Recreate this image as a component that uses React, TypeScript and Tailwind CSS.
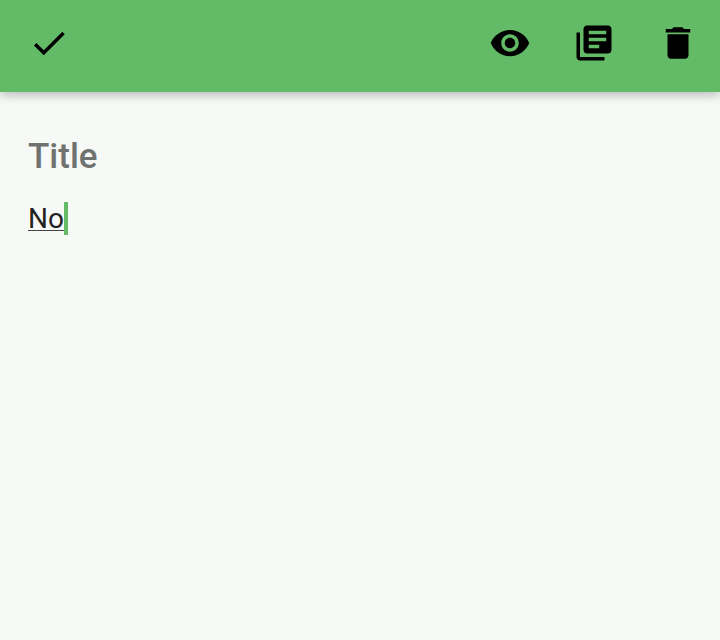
import React from 'react';

const icons = {
  check: 'M9 16.17 4.83 12l-1.42 1.41L9 19 21 7l-1.41-1.41z',
  eye: 'M12 4.5C7 4.5 2.73 7.61 1 12c1.73 4.39 6 7.5 11 7.5s9.27-3.11 11-7.5c-1.73-4.39-6-7.5-11-7.5zM12 17c-2.76 0-5-2.24-5-5s2.24-5 5-5 5 2.24 5 5-2.24 5-5 5zm0-8c-1.66 0-3 1.34-3 3s1.34 3 3 3 3-1.34 3-3-1.34-3-3-3z',
  notes: 'M4 6H2v14c0 1.1.9 2 2 2h14v-2H4V6zm16-4H8c-1.1 0-2 .9-2 2v12c0 1.1.9 2 2 2h12c1.1 0 2-.9 2-2V4c0-1.1-.9-2-2-2zm-1 9H9V9h10v2zm-4 4H9v-2h6v2zm4-8H9V5h10v2z',
  trash: 'M6 19c0 1.1.9 2 2 2h8c1.1 0 2-.9 2-2V7H6v12zM19 4h-3.5l-1-1h-5l-1 1H5v2h14V4z',
};

function IconButton({ label, path }: { label: string; path: string }) {
  return (
    <button aria-label={label} className="h-[42px] w-[42px] shrink-0">
      <svg viewBox="0 0 24 24" className="h-full w-full fill-black">
        <path d={path} />
      </svg>
    </button>
  );
}

export default function App() {
  return (
    <div className="flex h-[640px] w-[720px] flex-col overflow-hidden bg-[#f7f9f7] font-['Roboto',sans-serif]">
      <header className="flex h-[92px] shrink-0 items-start justify-between bg-[#64bb67] pt-[22px] pr-[21px] pl-7 shadow-[0_3px_10px_rgba(0,0,0,0.26)]">
        <IconButton label="Save" path={icons.check} />
        <nav className="flex gap-[42px]">
          <IconButton label="Preview" path={icons.eye} />
          <IconButton label="Notebooks" path={icons.notes} />
          <IconButton label="Delete" path={icons.trash} />
        </nav>
      </header>
      <main className="flex flex-col px-7 pt-11 text-[#222]">
        <h1 className="text-[35px] leading-[42px] font-medium text-[#707270]">Title</h1>
        <div className="mt-6 flex h-[33px] items-start">
          <span className="text-[28px] leading-[33px] underline decoration-[#444] decoration-1 underline-offset-2">No</span>
          <span className="h-[33px] w-1 bg-[#64bb67]" />
        </div>
      </main>
    </div>
  );
}
